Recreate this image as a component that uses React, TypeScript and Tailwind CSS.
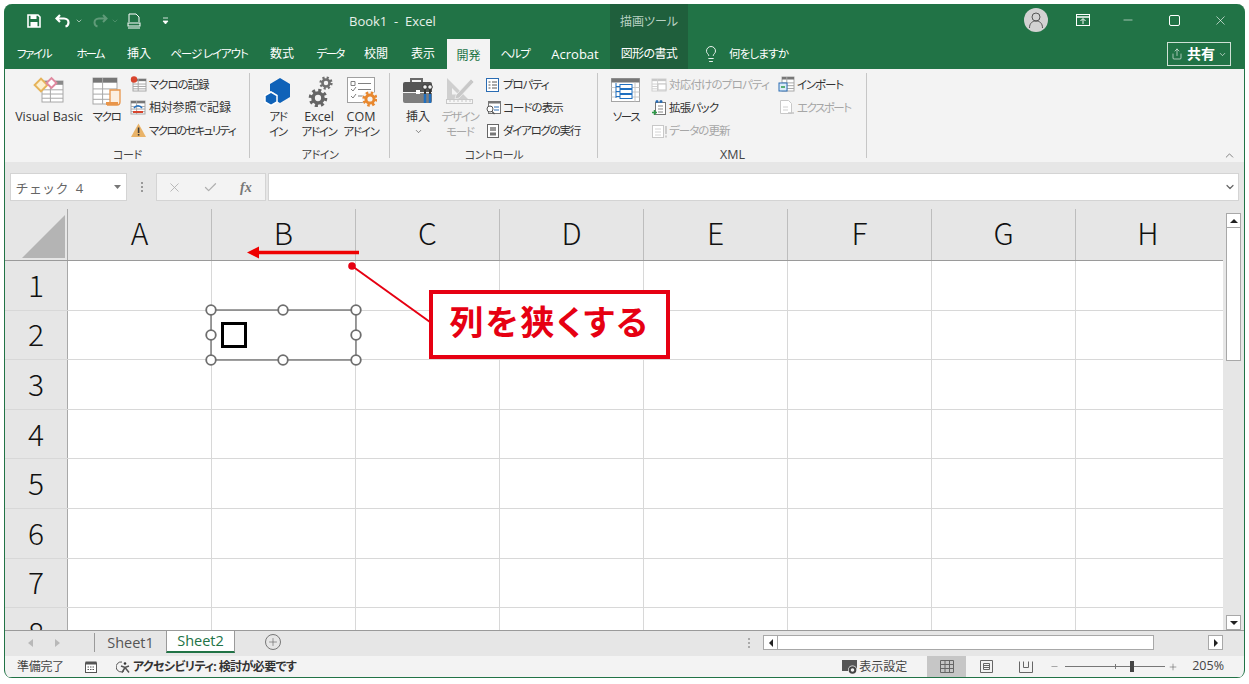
import { Lightbulb, Plus, X, Minus, Check, ChevronDown, ChevronUp, Share } from "lucide-react";
import type { ReactNode } from "react";

const TABS = [
  { label: "ファイル", w: "w-[58px]", t: "text-[11.5px] tracking-[-1.4px]" },
  { label: "ホーム", w: "w-[54px]", t: "text-[11.5px] tracking-[-2px]" },
  { label: "挿入", w: "w-[44px]", t: "text-[12px]" },
  { label: "ページ レイアウト", w: "w-[96px]", t: "text-[11.5px] tracking-[-1.1px]" },
  { label: "数式", w: "w-[50px]", t: "text-[12px]" },
  { label: "データ", w: "w-[46px]", t: "text-[11.5px] tracking-[-1.6px]" },
  { label: "校閲", w: "w-[46px]", t: "text-[12px]" },
  { label: "表示", w: "w-[48px]", t: "text-[12px]" },
];

const COLS = ["A", "B", "C", "D", "E", "F", "G"];
const ROWS = ["1", "2", "3", "4", "5", "6", "7", "8"];

function Gear({ cx, cy, r, color }: { cx: number; cy: number; r: number; color: string }) {
  const teeth = 2 * Math.PI * r * 1.0;
  return (
    <g fill="none" stroke={color}>
      <circle cx={cx} cy={cy} r={r} strokeWidth={r * 0.55} strokeDasharray={`${teeth / 16} ${teeth / 16}`} />
      <circle cx={cx} cy={cy} r={r * 0.68} strokeWidth={r * 0.5} />
    </g>
  );
}

function MiniTable({ x, y, w, h, head = "#6b6b6b", dim = false }: { x: number; y: number; w: number; h: number; head?: string; dim?: boolean }) {
  const line = dim ? "#d0d0d0" : "#a8a8a8";
  return (
    <g>
      <rect x={x} y={y} width={w} height={h} fill="#fff" stroke={line} />
      <rect x={x} y={y} width={w} height={Math.max(2, h * 0.18)} fill={dim ? "#c8c8c8" : head} />
      {[0.42, 0.62, 0.82].map((k) => (
        <line key={k} x1={x} x2={x + w} y1={y + h * k} y2={y + h * k} stroke={line} />
      ))}
      <line x1={x + w * 0.4} x2={x + w * 0.4} y1={y} y2={y + h} stroke={line} />
    </g>
  );
}

function Ico({ w, h, children }: { w: number; h: number; children: ReactNode }) {
  return (
    <svg width={w} height={h} viewBox={`0 0 ${w} ${h}`} className="block">
      {children}
    </svg>
  );
}

const VbIcon = (
  <Ico w={32} h={34}>
    <MiniTable x={9} y={7} w={21} h={21} head="#8a8a8a" />
    <rect x={3.5} y={6.5} width={9} height={9} transform="rotate(45 8 11)" fill="#fdf0cf" stroke="#e6b45c" strokeWidth={2} />
    <rect x={15} y={5.5} width={7} height={7} transform="rotate(45 18.500 9)" fill="#fff" stroke="#e08aa0" strokeWidth={2} />
  </Ico>
);

const MacroIcon = (
  <Ico w={30} h={32}>
    <MiniTable x={1} y={3} w={24} h={26} head="#767676" />
    <path d="M18 15h10v12c0 2-1 3-3 3H15c2 0 3-1 3-3z" fill="#fbefe2" stroke="#e8954a" strokeWidth={1.3} />
    <rect x={14} y={27} width={12} height={3} fill="#e8954a" />
  </Ico>
);

const AddinIcon = (
  <Ico w={28} h={30}>
    <path d="M16 2l10 6v13l-10 6-6-3.5V17l-4-2V8z" fill="#0f62b8" />
    <path d="M7 16l6 3.5v6.5l-6 3.5-6-3.5v-6.5z" fill="#0f62b8" stroke="#fff" strokeWidth={1.5} />
  </Ico>
);

const ExcelAddinIcon = (
  <Ico w={30} h={32}>
    <Gear cx={22} cy={8} r={5.2} color="#707070" />
    <Gear cx={14} cy={23} r={7.3} color="#666" />
  </Ico>
);

const ComIcon = (
  <Ico w={32} h={32}>
    <rect x={2.5} y={2.5} width={27} height={25} fill="#fff" stroke="#a0a0a0" />
    <path d="M6 6.500h4v4H6zM13 8.500h13M6 14l2 2 3-4M13 14.500h13M6 21l2 2 3-4M13 21h5" fill="none" stroke="#808080" />
    <circle cx={25} cy={24} r={8} fill="#f3f3f3" />
    <Gear cx={25} cy={24} r={6} color="#e8882f" />
  </Ico>
);

const ToolboxIcon = (
  <Ico w={32} h={30}>
    <path d="M9 6V3h11v3" fill="none" stroke="#6a6a6a" strokeWidth={2} />
    <path d="M1 8a2 2 0 0 1 2-2h25a2 2 0 0 1 2 2v8H1z" fill="#555" />
    <path d="M1 17h29v8a2 2 0 0 1-2 2H3a2 2 0 0 1-2-2z" fill="#7d7d7d" />
    <rect x={14} y={14} width={4} height={4} fill="#fff" />
    <path d="M23 18v9M28 18v9" stroke="#1f6fc0" strokeWidth={2.5} />
    <path d="M23 12v6M28 12v6" stroke="#333" strokeWidth={2} />
    <circle cx={23} cy={11} r={2.300} fill="#f3f3f3" stroke="#333" />
    <circle cx={28} cy={11} r={2.300} fill="#f3f3f3" stroke="#333" />
  </Ico>
);

const DesignIcon = (
  <Ico w={32} h={32}>
    <path fillRule="evenodd" d="M3 3l21 21H3zM8 13v6.500h6.500z" fill="#cfcfcf" />
    <path d="M12 20L27 4l3 3-15 16-4 1z" fill="#c8c8c8" stroke="#f3f3f3" strokeWidth={0.7} />
    <rect x={2.500} y={24.500} width={26} height={4} fill="#f6f6f6" stroke="#c8c8c8" />
    <path d="M6 25v2M10 25v2M14 25v2M18 25v2M22 25v2M26 25v2" stroke="#c8c8c8" />
  </Ico>
);

const SourceIcon = (
  <Ico w={30} h={28}>
    <rect x={0.5} y={1.5} width={28} height={23} fill="#fff" stroke="#a5a5a5" />
    <rect x={0.5} y={1.5} width={28} height={4} fill="#777" />
    <path d="M0.500 10.500h28M0.500 15h28M0.500 20h28M24 5.500v19" stroke="#c8c8c8" />
    <path d="M5 6v15M5 9.500h4M5 14.500h4M5 19.500h4" stroke="#1f6fc0" fill="none" />
    <rect x={9} y={7.500} width={12} height={4} fill="#fff" stroke="#1f6fc0" />
    <rect x={9} y={12.500} width={12} height={4} fill="#fff" stroke="#1f6fc0" />
    <rect x={9} y={17.500} width={12} height={4} fill="#fff" stroke="#1f6fc0" />
  </Ico>
);

const SMALL: Record<string, ReactNode> = {
  record: (
    <Ico w={17} h={17}>
      <MiniTable x={3} y={3} w={13} h={12} head="#777" />
      <circle cx={4} cy={3.5} r={3.2} fill="#d8452e" />
    </Ico>
  ),
  relative: (
    <Ico w={17} h={17}>
      <MiniTable x={1} y={2} w={14} h={13} head="#777" />
      <path d="M4 9c2-3 6-3 8 0" fill="none" stroke="#1f6fc0" strokeWidth={1.5} />
      <rect x={3} y={12} width={10} height={2} fill="#d8452e" />
    </Ico>
  ),
  warn: (
    <Ico w={17} h={17}>
      <path d="M8.5 1.5L16 15H1z" fill="#e9b368" />
      <rect x={7.8} y={5.5} width={1.6} height={5.5} fill="#3a3a3a" />
      <rect x={7.8} y={12} width={1.6} height={1.6} fill="#3a3a3a" />
    </Ico>
  ),
  prop: (
    <Ico w={16} h={16}>
      <rect x={1.5} y={1.5} width={12} height={13} fill="#fff" stroke="#2a6cb3" />
      <path d="M3.5 5h2M7 5h5M3.5 8h2M7 8h5M3.5 11h2M7 11h5" stroke="#555" />
    </Ico>
  ),
  code: (
    <Ico w={17} h={16}>
      <rect x={3.5} y={1.5} width={12} height={12} fill="#fff" stroke="#777" />
      <rect x={3.5} y={1.5} width={12} height={2} fill="#777" />
      <path d="M9 7h5M9 10h5" stroke="#2a6cb3" />
      <circle cx={5} cy={9} r={3} fill="#fff" stroke="#555" />
      <path d="M7 11.5l2.5 2.5" stroke="#555" strokeWidth={1.3} />
    </Ico>
  ),
  dialog: (
    <Ico w={16} h={16}>
      <rect x={2.5} y={1.5} width={11} height={13} fill="#fff" stroke="#666" />
      <rect x={5} y={4} width={6} height={4} fill="#999" />
      <rect x={5} y={9.5} width={6} height={3} fill="#777" />
    </Ico>
  ),
  map: (
    <Ico w={17} h={16}>
      <MiniTable x={1} y={2} w={14} h={12} dim />
      <rect x={7} y={7} width={8} height={6} fill="#fff" stroke="#c4c4c4" />
    </Ico>
  ),
  pack: (
    <Ico w={17} h={17}>
      <rect x={4.5} y={3.5} width={10} height={12} fill="#fff" stroke="#777" />
      <path d="M7 7h5M7 10h5M7 13h5" stroke="#888" />
      <path d="M3.5 11v5M1 13.5h5" stroke="#2e9a48" strokeWidth={1.5} />
      <circle cx={6} cy={2.5} r={1.5} fill="#2a6cb3" />
      <circle cx={10} cy={2.5} r={1.5} fill="#2a6cb3" />
    </Ico>
  ),
  refresh: (
    <Ico w={17} h={16}>
      <rect x={1.5} y={2.5} width={11} height={12} fill="#fff" stroke="#c8c8c8" />
      <path d="M4 6h6M4 9h6M4 12h6" stroke="#d4d4d4" />
      <path d="M15 3v8M15 12.5v2" stroke="#c4c4c4" strokeWidth={1.6} />
    </Ico>
  ),
  import: (
    <Ico w={17} h={17}>
      <MiniTable x={4} y={1} w={12} h={14} head="#777" />
      <rect x={1} y={7} width={8} height={8} fill="#dcebf8" stroke="#2a6cb3" />
      <path d="M3 11h4" stroke="#2e9a48" strokeWidth={1.4} />
    </Ico>
  ),
  export: (
    <Ico w={17} h={17}>
      <path d="M2.5 1.5h8l3 3v10h-11z" fill="#fff" stroke="#c8c8c8" />
      <path d="M5 8h5M5 11h5" stroke="#d0d0d0" />
      <path d="M10 14h6" stroke="#c4c4c4" strokeWidth={1.4} />
    </Ico>
  ),
};

function lineClass(l: string) {
  if (/^[ァ-ヶー]+$/.test(l)) return "text-[11.5px] tracking-[-1.3px]";
  if (/^[A-Za-z ]+$/.test(l)) return "text-[12.5px]";
  return "text-[12px]";
}

function LargeCmd({ w, icon, lines, dim, chevron }: { w: string; icon: ReactNode; lines: string[]; dim?: boolean; chevron?: boolean }) {
  return (
    <div className={`${w} flex shrink-0 flex-col items-center ${dim ? "text-[#a6a6a6]" : "text-[#333]"}`}>
      <div className="flex h-[36px] items-center justify-center">{icon}</div>
      {lines.map((l) => (
        <div key={l} className={`h-[15px] whitespace-nowrap text-center leading-[15px] ${lineClass(l)}`}>
          {l}
        </div>
      ))}
      {chevron && <ChevronDown size={9} strokeWidth={1.5} className="mt-[3px]" />}
    </div>
  );
}

function SmallCmd({ icon, label, dim, slot = "w-[19px]", track = "tracking-[-1.1px]" }: { icon: ReactNode; label: string; dim?: boolean; slot?: string; track?: string }) {
  return (
    <div className={`flex h-[23px] items-center whitespace-nowrap text-[11.5px] ${track} ${dim ? "text-[#a6a6a6]" : "text-[#333]"}`}>
      <span className={`${slot} shrink-0`}>{icon}</span>
      {label}
    </div>
  );
}

function Group({ w, label, children }: { w: string; label: string; children: ReactNode }) {
  return (
    <div className={`${w} relative flex shrink-0 flex-col pt-[4px]`}>
      <div className="flex h-[74px]">{children}</div>
      <div className={`mt-[1px] text-center leading-[14px] text-[#444] ${label === "XML" ? "text-[12.5px]" : "text-[11px] tracking-[-0.4px]"}`}>{label}</div>
      <div className="absolute bottom-[4px] right-0 top-[4px] w-px bg-[#c6c6c6]" />
    </div>
  );
}

function Ribbon() {
  return (
    <div className="relative flex h-[93px] shrink-0 bg-[#f3f3f3]">
      <Group w="w-[245px]" label="コード">
        <div className="flex pl-[5px]">
          <LargeCmd w="w-[78px]" icon={VbIcon} lines={["Visual Basic"]} />
          <LargeCmd w="w-[37px]" icon={MacroIcon} lines={["マクロ"]} />
        </div>
        <div className="ml-[5px] flex flex-col">
          <SmallCmd icon={SMALL.record} label="マクロの記録" />
          <SmallCmd icon={SMALL.relative} label="相対参照で記録" track="text-[12px] tracking-[-0.2px]" />
          <SmallCmd icon={SMALL.warn} label="マクロのセキュリティ" track="tracking-[-1.65px]" />
        </div>
      </Group>
      <Group w="w-[140px]" label="アドイン">
        <div className="flex pl-[8px]">
          <LargeCmd w="w-[40px]" icon={AddinIcon} lines={["アド", "イン"]} />
          <LargeCmd w="w-[42px]" icon={ExcelAddinIcon} lines={["Excel", "アドイン"]} />
          <LargeCmd w="w-[42px]" icon={ComIcon} lines={["COM", "アドイン"]} />
        </div>
      </Group>
      <Group w="w-[208px]" label="コントロール">
        <div className="flex pl-[8px]">
          <LargeCmd w="w-[40px]" icon={ToolboxIcon} lines={["挿入"]} chevron />
          <LargeCmd w="w-[44px]" icon={DesignIcon} lines={["デザイン", "モード"]} dim />
        </div>
        <div className="ml-[3px] flex flex-col">
          <SmallCmd icon={SMALL.prop} label="プロパティ" slot="w-[18px]" track="tracking-[-1.15px]" />
          <SmallCmd icon={SMALL.code} label="コードの表示" slot="w-[18px]" track="tracking-[-0.95px]" />
          <SmallCmd icon={SMALL.dialog} label="ダイアログの実行" slot="w-[18px]" track="tracking-[-1.25px]" />
        </div>
      </Group>
      <Group w="w-[269px]" label="XML">
        <div className="flex pl-[8px]">
          <LargeCmd w="w-[40px]" icon={SourceIcon} lines={["ソース"]} />
        </div>
        <div className="ml-[5px] flex w-[127px] flex-col">
          <SmallCmd icon={SMALL.map} label="対応付けのプロパティ" dim slot="w-[18px]" track="tracking-[-0.8px]" />
          <SmallCmd icon={SMALL.pack} label="拡張パック" slot="w-[18px]" track="tracking-[-0.75px]" />
          <SmallCmd icon={SMALL.refresh} label="データの更新" dim slot="w-[18px]" track="tracking-[-0.95px]" />
        </div>
        <div className="flex flex-col">
          <SmallCmd icon={SMALL.import} label="インポート" track="tracking-[-1.15px]" />
          <SmallCmd icon={SMALL.export} label="エクスポート" dim track="tracking-[-1.5px]" />
        </div>
      </Group>
      <ChevronUp size={13} strokeWidth={1.3} className="absolute bottom-[0px] right-[8px] text-[#555]" />
    </div>
  );
}

function TitleBar() {
  return (
    <div className="flex h-[32px] shrink-0 items-center text-white">
      <div className="flex w-[344px] shrink-0 items-center pl-[22px] pt-[1px]">
        <svg width="14" height="14" viewBox="0 0 14 14">
          <path d="M1 1h10l2 2v10H1z" fill="none" stroke="#fff" strokeWidth="1.6" />
          <rect x="3.5" y="1" width="6" height="4" fill="#fff" />
          <rect x="3.5" y="8" width="7" height="5" fill="#fff" />
        </svg>
        <svg width="16" height="14" viewBox="0 0 16 14" className="ml-[14px]">
          <path d="M5 1L1.5 4.5 5 8M2 4.5h7c3 0 4.5 2 4.5 4s-1 3.5-3 4" fill="none" stroke="#fff" strokeWidth="2.2" />
        </svg>
        <ChevronDown size={8} strokeWidth={2} className="ml-[4px] text-[#d8e6dc]" />
        <svg width="16" height="14" viewBox="0 0 16 14" className="ml-[9px]">
          <path d="M11 1l3.5 3.5L11 8M14 4.5H7c-3 0-4.500 2-4.500 4s1 3.500 3 4" fill="none" stroke="#5f9a78" strokeWidth="2" />
        </svg>
        <ChevronDown size={8} strokeWidth={2} className="ml-[3px] text-[#5f9a78]" />
        <svg width="14" height="16" viewBox="0 0 14 16" className="ml-[8px]">
          <path d="M2 9V1h7l3 3v5" fill="none" stroke="#fff" />
          <rect x="1" y="10" width="12" height="3" fill="none" stroke="#fff" />
          <path d="M1 15h12" stroke="#fff" />
        </svg>
        <svg width="7" height="8" viewBox="0 0 7 8" className="ml-[21px]">
          <path d="M1 1h5M1 4h5L3.500 7z" fill="#fff" stroke="#fff" strokeWidth="0.8" />
        </svg>
      </div>
      <div className="w-[261px] shrink-0 whitespace-pre pt-[3px] text-[13px] text-[#e8f0ea]">Book1  -  Excel</div>
      <div className="flex h-full w-[78px] shrink-0 items-center justify-center bg-[#1f5f3c] pt-[4px] text-[12px] text-[#b9d1c2]">
        描画ツール
      </div>
      <div className="flex-1" />
      <div className="flex h-[24px] w-[24px] items-center justify-center rounded-full bg-[#d2d2d2]">
        <svg width="18" height="18" viewBox="0 0 18 18" fill="none" stroke="#555" strokeWidth="1">
          <circle cx="9" cy="6" r="4" />
          <path d="M2.500 17c0-5 3-7 6.500-7s6.500 2 6.500 7" />
        </svg>
      </div>
      <svg width="14" height="12" viewBox="0 0 14 12" className="ml-[28px]" fill="none" stroke="#fff">
        <rect x="0.500" y="0.500" width="13" height="11" />
        <path d="M0.500 3h13" strokeWidth="1.5" />
        <path d="M7 10V5M4.500 7L7 4.500 9.500 7" />
      </svg>
      <Minus size={14} strokeWidth={1} className="ml-[31px]" />
      <svg width="11" height="11" viewBox="0 0 11 11" className="ml-[34px]" fill="none" stroke="#fff">
        <rect x="0.500" y="0.500" width="10" height="10" rx="1.500" />
      </svg>
      <X size={15} strokeWidth={1} className="ml-[33px] mr-[16px]" />
    </div>
  );
}

function TabRow() {
  return (
    <div className="flex h-[33px] shrink-0 items-end leading-[32px] text-white">
      {TABS.map((t) => (
        <div key={t.label} className={`${t.w} ${t.t} h-full shrink-0 whitespace-nowrap pt-[2px] text-center`}>
          {t.label}
        </div>
      ))}
      <div className="h-[30px] w-[43px] shrink-0 bg-[#f3f3f3] text-center text-[12px] leading-[33px] text-[#217346]">開発</div>
      <div className="h-full w-[50px] shrink-0 pt-[2px] text-center text-[11.5px] tracking-[-1.3px]">ヘルプ</div>
      <div className="h-full w-[70px] shrink-0 pt-[2px] text-center text-[13px]">Acrobat</div>
      <div className="h-full w-[78px] shrink-0 bg-[#1f5f3c] pt-[2px] text-center text-[12px] tracking-[-0.6px]">図形の書式</div>
      <div className="flex h-full items-center pl-[14px] pt-[2px]">
        <Lightbulb size={18} strokeWidth={1.2} />
        <span className="ml-[9px] text-[11.5px] tracking-[-0.8px]">何をしますか</span>
      </div>
      <div className="flex-1" />
      <div className="mb-[3px] mr-[13px] flex h-[24px] w-[64px] items-center justify-center border border-[#cfe0d5] leading-none">
        <Share size={12} strokeWidth={1.2} />
        <span className="ml-[4px] text-[14px] font-bold">共有</span>
        <ChevronDown size={9} strokeWidth={1.6} className="ml-[3px]" />
      </div>
    </div>
  );
}

function FormulaBar() {
  return (
    <div className="flex h-[47px] shrink-0 items-start bg-[#e6e6e6] pl-[5px] pt-[11px]">
      <div className="flex h-[28px] w-[117px] items-center justify-between border border-[#d4d4d4] bg-white pl-[5px] pr-[5px] pt-[3px] text-[13px] tracking-[2.4px] text-[#666]">
        チェック 4
        <svg width="7" height="4" viewBox="0 0 7 4" className="mb-[3px]">
          <path d="M0 0h7L3.500 4z" fill="#777" />
        </svg>
      </div>
      <div className="flex h-[28px] w-[29px] flex-col items-center justify-center gap-[2px]">
        {[0, 1, 2].map((i) => (
          <span key={i} className="h-[2px] w-[2px] bg-[#999]" />
        ))}
      </div>
      <div className="flex h-[28px] w-[110px] items-center border border-[#d4d4d4] bg-[#f3f3f3] text-[#b0b0b0]">
        <X size={15} strokeWidth={1.4} className="ml-[10px]" />
        <Check size={15} strokeWidth={2} className="ml-[21px]" />
        <span className="ml-[22px] font-['Liberation_Serif',serif] text-[14px] font-bold italic text-[#777]">fx</span>
      </div>
      <div className="ml-[2px] mr-[5px] flex h-[28px] flex-1 items-center justify-end border border-[#d4d4d4] bg-white pr-[2px]">
        <ChevronDown size={12} strokeWidth={2.4} className="text-[#666]" />
      </div>
    </div>
  );
}

function Grid() {
  return (
    <div className="flex min-w-0 flex-1 flex-col overflow-hidden bg-white font-['Noto_Sans_CJK_JP',sans-serif] text-[30px] font-light text-[#111]">
      <div className="flex h-[52px] shrink-0 border-b border-[#9a9a9a] bg-[#e6e6e6]">
        <div className="relative w-[63px] shrink-0 border-r border-[#a8a8a8]">
          <svg width="43" height="43" viewBox="0 0 43 43" className="absolute bottom-[2px] right-[2px]">
            <path d="M43 0v43H0z" fill="#b4b4b4" />
          </svg>
        </div>
        {COLS.map((c) => (
          <div key={c} className="flex w-[144px] shrink-0 items-center justify-center border-r border-[#bdbdbd] pb-[4px]">
            {c}
          </div>
        ))}
        <div className="flex flex-1 items-center justify-center pb-[4px] pr-[3px]">H</div>
      </div>
      {ROWS.map((r) => (
        <div key={r} className="flex h-[49.6px] shrink-0 border-b border-[#d8d8d8]">
          <div className="flex w-[63px] shrink-0 items-center justify-center border-r border-[#a8a8a8] bg-[#e6e6e6] pb-[2px]">
            {r}
          </div>
          {COLS.map((c) => (
            <div key={c} className="w-[144px] shrink-0 border-r border-[#d8d8d8]" />
          ))}
          <div className="flex-1" />
        </div>
      ))}
    </div>
  );
}

function ScrollBtn({ path, className = "" }: { path: string; className?: string }) {
  return (
    <div className={`flex h-[15px] w-[15px] shrink-0 items-center justify-center border border-[#a8a8a8] bg-white ${className}`}>
      <svg width="8" height="8" viewBox="0 0 8 8">
        <path d={path} fill="#222" />
      </svg>
    </div>
  );
}

function VScroll() {
  return (
    <div className="flex w-[21px] shrink-0 flex-col items-start bg-[#e6e6e6] pl-[3px] pt-[4px]">
      <ScrollBtn path="M4 2l4 4H0z" />
      <div className="h-[133px] w-[15px] border-x border-b border-[#a8a8a8] bg-white" />
      <div className="flex-1" />
      <ScrollBtn path="M0 2h8L4 6z" />
    </div>
  );
}

function SheetBar() {
  return (
    <div className="flex h-[26px] shrink-0 items-start border-t border-[#9a9a9a] bg-[#e6e6e6]">
      <div className="flex h-full w-[89px] shrink-0 items-center pb-[2px] pl-[23px] text-[#b8b8b8]">
        <svg width="6" height="8" viewBox="0 0 6 8">
          <path d="M5 0v8L0 4z" fill="currentColor" />
        </svg>
        <svg width="6" height="8" viewBox="0 0 6 8" className="ml-[20px]">
          <path d="M1 0v8l5-4z" fill="currentColor" />
        </svg>
      </div>
      <div className="mt-[2px] h-[19px] w-px shrink-0 bg-[#9a9a9a]" />
      <div className="flex h-[23px] w-[71px] shrink-0 items-center justify-center text-[14.5px] text-[#555]">Sheet1</div>
      <div className="-mt-px flex h-[23px] w-[69px] shrink-0 items-center justify-center border-x border-t border-[#9a9a9a] border-b-2 border-b-[#217346] bg-white text-[14.5px] text-[#217346]">
        Sheet2
      </div>
      <div className="ml-[30px] mt-[3px] flex h-[16px] w-[16px] shrink-0 items-center justify-center rounded-full border border-[#777] text-[#666]">
        <Plus size={12} strokeWidth={1.3} />
      </div>
      <div className="flex-1" />
      <div className="mr-[13px] mt-[7px] flex flex-col gap-[2px]">
        {[0, 1, 2].map((i) => (
          <span key={i} className="h-[2px] w-[2px] bg-[#aaa]" />
        ))}
      </div>
      <div className="mr-[21px] mt-[4px] flex w-[460px] shrink-0">
        <ScrollBtn path="M6 0v8L2 4z" />
        <div className="h-[15px] w-[376px] border-y border-r border-[#a8a8a8] bg-white" />
        <div className="flex-1" />
        <ScrollBtn path="M2 0v8l4-4z" />
      </div>
    </div>
  );
}

function StatusBar() {
  return (
    <div className="flex h-[22px] shrink-0 items-center border-b border-[#217346] bg-[#f3f3f3] text-[12px] tracking-[-0.3px] text-[#444]">
      <span className="ml-[12px]">準備完了</span>
      <svg width="12" height="12" viewBox="0 0 12 12" className="ml-[21px]">
        <rect x="0.500" y="2" width="11" height="9.500" fill="#fff" stroke="#555" />
        <rect x="0.500" y="0.500" width="11" height="3" fill="#555" />
        <path d="M2.500 6h7M2.500 8.500h7" stroke="#555" strokeDasharray="1.500 1" />
      </svg>
      <svg width="15" height="14" viewBox="0 0 15 14" className="ml-[19px]" fill="none" stroke="#555">
        <path d="M6 2a5 5 0 1 0 2 9" />
        <circle cx="9" cy="3.500" r="1.300" fill="#333" stroke="none" />
        <path d="M5 6l4 1.500L13 6M9 7.500l-3 5M9 7.500l4 5" strokeWidth="1.500" />
      </svg>
      <span className="ml-[2px] font-bold tracking-[-0.6px] text-[#333]">アクセシビリティ: 検討が必要です</span>
      <div className="flex-1" />
      <svg width="16" height="16" viewBox="0 0 16 16">
        <rect x="0" y="1" width="15" height="11" fill="#555" />
        <circle cx="10.500" cy="11" r="4.500" fill="#f3f3f3" />
        <circle cx="10.500" cy="11" r="2.800" fill="none" stroke="#444" strokeWidth="2" />
      </svg>
      <span className="ml-[1px] mr-[20px] text-[12px] tracking-normal">表示設定</span>
      <div className="flex h-full w-[39px] items-center justify-center bg-[#c6c6c6]">
        <svg width="14" height="13" viewBox="0 0 14 13" fill="none" stroke="#666">
          <path d="M0.500 0.500h13v12h-13zM0.500 4.500h13M0.500 8.500h13M5 0.500v12M9.500 0.500v12" />
        </svg>
      </div>
      <svg width="13" height="13" viewBox="0 0 13 13" className="ml-[14px]" fill="none" stroke="#666">
        <path d="M0.500 0.500h12v12h-12zM3.500 3.500h6v6h-6zM3.500 5.500h6M3.500 7.500h6" />
      </svg>
      <svg width="14" height="12" viewBox="0 0 14 12" className="ml-[26px]" fill="none" stroke="#666">
        <path d="M0.500 0.500v11h13v-11M4.500 0.500v6h5v-6" />
      </svg>
      <Minus size={9} strokeWidth={1.3} className="ml-[17px] text-[#555]" />
      <div className="relative ml-[6px] h-px w-[100px] bg-[#777]">
        <span className="absolute left-[50px] top-[-2px] h-[5px] w-px bg-[#777]" />
        <span className="absolute left-[65px] top-[-5px] h-[11px] w-[4px] bg-[#444]" />
      </div>
      <Plus size={10} strokeWidth={1.3} className="ml-[3px] text-[#555]" />
      <span className="ml-[14px] mr-[20px] text-[12.5px] tracking-normal">205%</span>
    </div>
  );
}

// 図形の選択枠・矢印・吹き出しはシートの上に重ねる
function Overlays() {
  const handles = [
    [211, 310], [283, 310], [356, 310],
    [211, 335], [356, 335],
    [211, 360], [283, 360], [356, 360],
  ];
  return (
    <>
      <svg width="1249" height="684" viewBox="0 0 1249 684" className="pointer-events-none absolute left-0 top-0">
        <rect x="211" y="310" width="145" height="50" fill="none" stroke="#6e6e6e" strokeWidth="1.300" />
        {handles.map(([x, y]) => (
          <circle key={`${x}-${y}`} cx={x} cy={y} r="4.800" fill="#fff" stroke="#6e6e6e" strokeWidth="1.800" />
        ))}
        <line x1="359" y1="252.500" x2="256" y2="252.500" stroke="#ee0000" strokeWidth="3.500" />
        <path d="M247 252.500l12-6v12z" fill="#ee0000" />
        <circle cx="352" cy="266" r="3.800" fill="#e60012" />
        <line x1="352" y1="266" x2="430" y2="322" stroke="#e60012" strokeWidth="2" />
      </svg>
      <div className="absolute left-[221px] top-[322px] h-[26px] w-[26px] border-[3px] border-black bg-white" />
      <div className="absolute left-[429px] top-[290px] flex h-[69px] w-[241px] items-center justify-center border-[4px] border-[#e60012] bg-white pb-[5px] text-[34px] font-bold tracking-[2px] text-[#e60012]">
        列を狭くする
      </div>
    </>
  );
}

export default function App() {
  return (
    <div className="relative h-[684px] w-[1249px] overflow-hidden bg-white pb-[6px] pl-[4px] pr-[4px] pt-[4px] font-['Open_Sans','Noto_Sans_CJK_JP',sans-serif] [font-feature-settings:'palt']">
      <div className="flex h-full flex-col overflow-hidden rounded-[8px] border-x border-[#217346] bg-[#217346]">
        <TitleBar />
        <TabRow />
        <Ribbon />
        <FormulaBar />
        <div className="flex min-h-0 flex-1 bg-[#e6e6e6]">
          <Grid />
          <VScroll />
        </div>
        <SheetBar />
        <StatusBar />
      </div>
      <Overlays />
    </div>
  );
}
